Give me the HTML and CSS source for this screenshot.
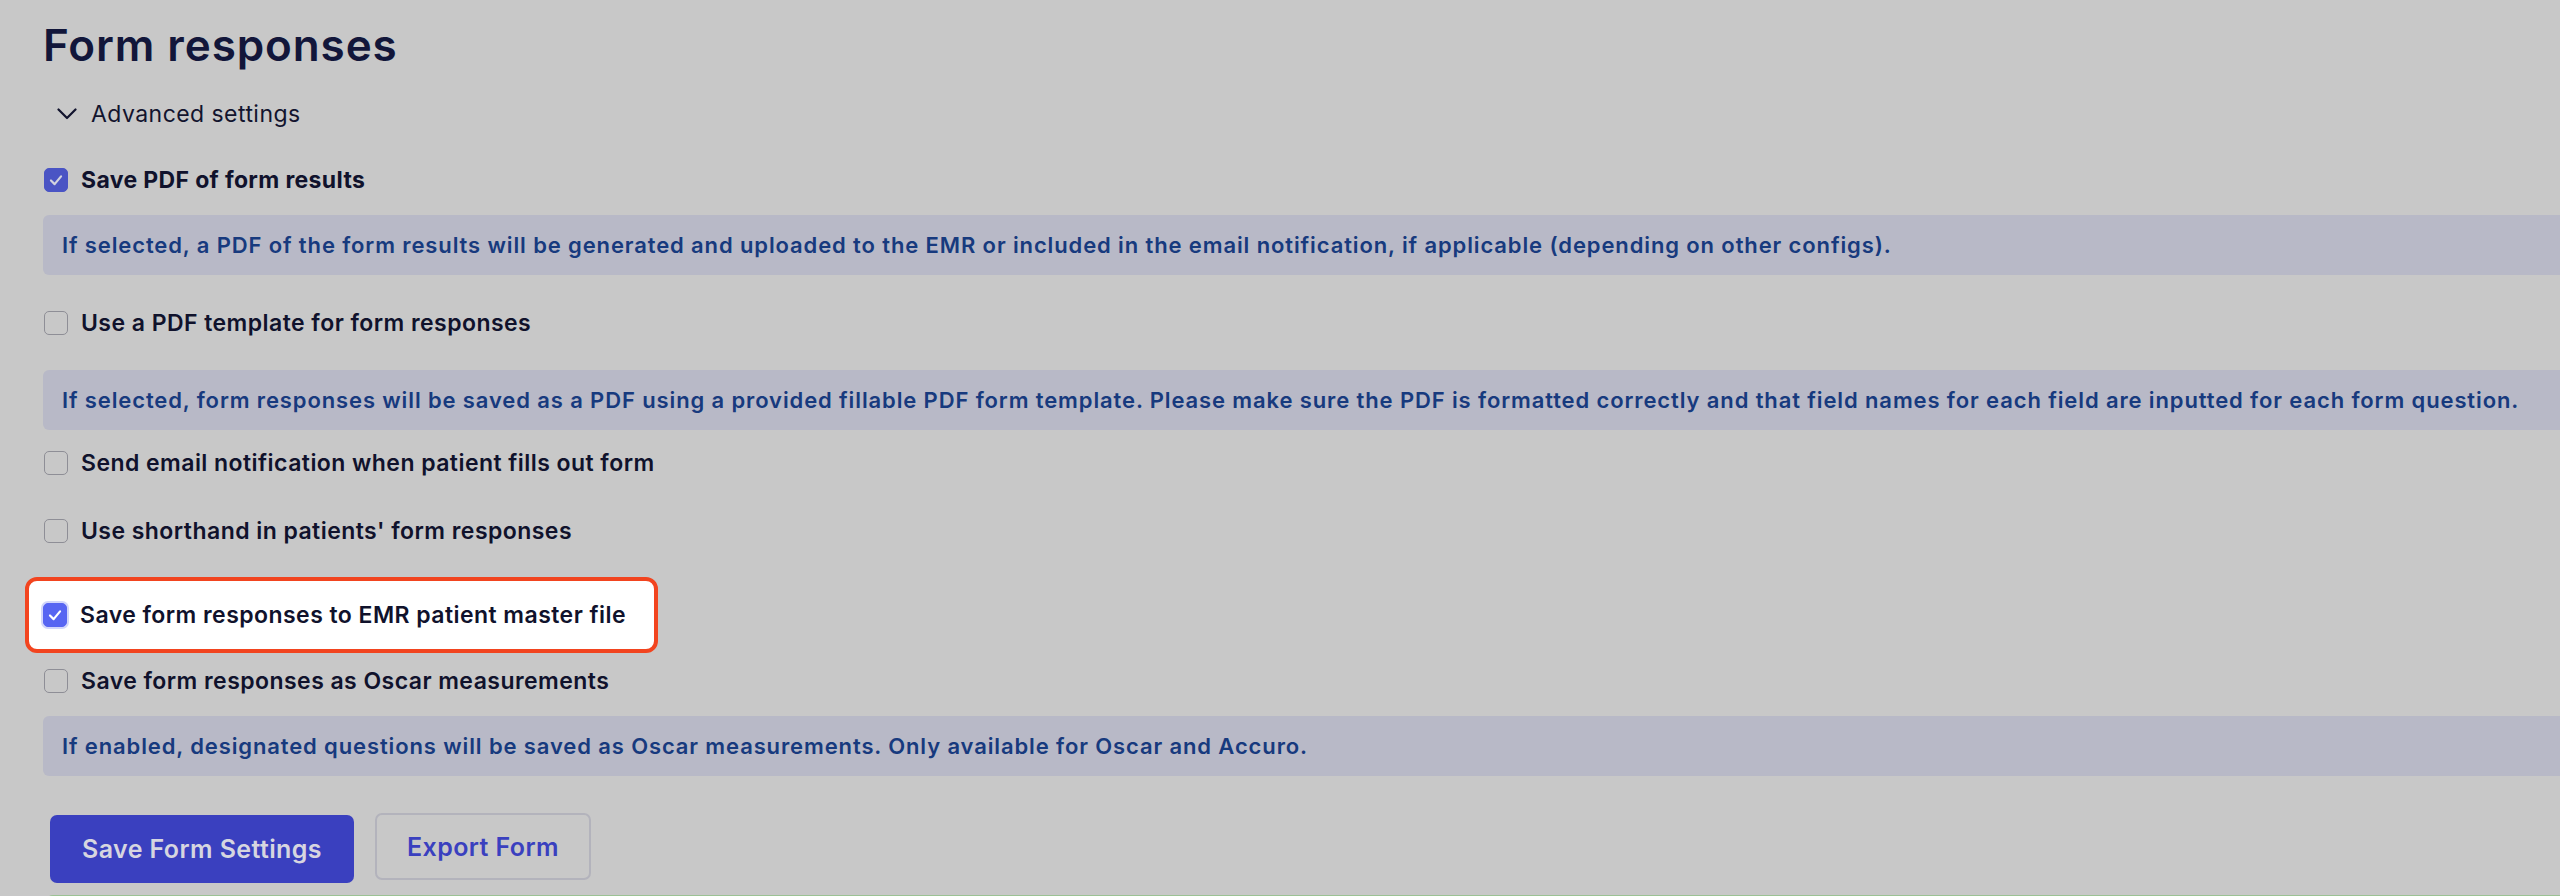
FILE: index.html
```html
<!DOCTYPE html>
<html lang="en">
<head>
<meta charset="utf-8">
<title>Form responses</title>
<link rel="stylesheet" href="styles.css">
</head>
<body>
<main class="page">
  <h1 class="title">Form responses</h1>
  <div class="advanced">
    <svg class="chev" width="20" height="12" viewBox="0 0 20 12"><path d="M1.5 1.5 L10 10 L18.5 1.5" fill="none" stroke="#12142e" stroke-width="2.2" stroke-linecap="round" stroke-linejoin="round"/></svg>
    <span>Advanced settings</span>
  </div>

  <label class="opt opt-1 strong"><span class="cb checked"><svg viewBox="0 0 24 24"><path d="M6.5 12.5 L10.5 16.5 L17.5 8" fill="none" stroke="#d2d3de" stroke-width="2.4" stroke-linecap="round" stroke-linejoin="round"/></svg></span><span class="lbl">Save PDF of form results</span></label>
  <div class="info info-1">If selected, a PDF of the form results will be generated and uploaded to the EMR or included in the email notification, if applicable (depending on other configs).</div>

  <label class="opt opt-2"><span class="cb"></span><span class="lbl">Use a PDF template for form responses</span></label>
  <div class="info info-2">If selected, form responses will be saved as a PDF using a provided fillable PDF form template. Please make sure the PDF is formatted correctly and that field names for each field are inputted for each form question.</div>

  <label class="opt opt-3"><span class="cb"></span><span class="lbl">Send email notification when patient fills out form</span></label>
  <label class="opt opt-4"><span class="cb"></span><span class="lbl">Use shorthand in patients' form responses</span></label>

  <label class="opt opt-5 spotlight"><span class="cb checked bright"><svg viewBox="0 0 24 24"><path d="M6.5 12.5 L10.5 16.5 L17.5 8" fill="none" stroke="#ffffff" stroke-width="2.4" stroke-linecap="round" stroke-linejoin="round"/></svg></span><span class="lbl">Save form responses to EMR patient master file</span></label>

  <label class="opt opt-6"><span class="cb"></span><span class="lbl">Save form responses as Oscar measurements</span></label>
  <div class="info info-3">If enabled, designated questions will be saved as Oscar measurements. Only available for Oscar and Accuro.</div>

  <div class="actions">
    <button class="btn btn-primary">Save Form Settings</button>
    <button class="btn btn-secondary">Export Form</button>
  </div>
  <div class="next-card"></div>
</main>
</body>
</html>
```
FILE: styles.css
```css
html, body {
  margin: 0;
  padding: 0;
  background: #c8c8c8;
}
body {
  width: 2560px;
  height: 896px;
  overflow: hidden;
  font-family: Inter, Roboto, "Liberation Sans", sans-serif;
  color: #10122c;
}
.page {
  padding: 20px 0 0 43px;
  display: flex;
  flex-direction: column;
  align-items: flex-start;
}
.title {
  margin: 0;
  font-family: Inter, "Noto Sans", sans-serif;
  font-weight: 600;
  font-size: 44px;
  line-height: 50px;
  color: #12163a;
  letter-spacing: 0.9px;
}
.advanced {
  margin-top: 29px;
  height: 30px;
  display: flex;
  align-items: center;
  gap: 14px;
  padding-left: 14px;
  font-family: Inter, "Noto Sans", sans-serif;
  font-size: 23px;
  line-height: 30px;
  letter-spacing: 0.45px;
  color: #12142e;
}
.chev { display: block; }
.opt {
  display: flex;
  align-items: center;
  height: 32px;
  padding-left: 1px;
  gap: 13px;
  font-family: Inter, Roboto, sans-serif;
  font-weight: 600;
  font-size: 23px;
  line-height: 32px;
  letter-spacing: 0.45px;
  color: #10122c;
}
.opt.strong {
  font-weight: 700;
  font-size: 23px;
  letter-spacing: 0.35px;
}
.cb {
  box-sizing: border-box;
  width: 24px;
  height: 24px;
  border: 1.5px solid #8e8e96;
  border-radius: 5px;
  flex: none;
  display: flex;
  align-items: center;
  justify-content: center;
}
.cb svg { width: 22px; height: 22px; display: block; }
.cb.checked {
  background: #4a54c4;
  border-color: #4a54c4;
}
.cb.bright {
  background: #5765f2;
  border-color: #5765f2;
  box-shadow: 0 0 0 2px #d2d6fb;
}
.info {
  align-self: stretch;
  height: 60px;
  line-height: 60px;
  padding-left: 19px;
  background: #b8b9c7;
  border-radius: 6px 0 0 6px;
  color: #173a7e;
  font-family: Inter, Roboto, sans-serif;
  font-weight: 600;
  font-size: 22px;
  letter-spacing: 0.88px;
  white-space: nowrap;
}
.opt-1 { margin-top: 35px; }
.info-1 { margin-top: 19px; }
.opt-2 { margin-top: 32px; }
.info-2 { margin-top: 31px; }
.opt-3 { margin-top: 17px; }
.opt-4 { margin-top: 36px; }
.spotlight {
  margin-top: 30px;
  margin-left: -18px;
  height: 68px;
  padding: 0 28px 0 14px;
  background: #ffffff;
  border: 4px solid #f2441f;
  border-radius: 12px;
}
.opt-6 { margin-top: 12px; }
.info-3 { margin-top: 19px; }
.actions {
  margin-top: 37px;
  display: flex;
  align-items: flex-start;
  gap: 21px;
  padding-left: 7px;
}
.btn {
  font-family: Inter, "Noto Sans", sans-serif;
  font-weight: 600;
  font-size: 25px;
  letter-spacing: 0.4px;
  border-radius: 7px;
  cursor: pointer;
}
.btn-primary {
  margin-top: 2px;
  width: 304px;
  height: 68px;
  background: #3a40bf;
  border: none;
  color: #d6d6e0;
}
.btn-secondary {
  width: 216px;
  height: 67px;
  background: transparent;
  border: 2px solid #b3b3bc;
  color: #3a40bf;
}
.next-card {
  margin-top: 12px;
  margin-left: 2px;
  align-self: stretch;
  height: 10px;
  border-top: 2px solid #9cc294;
  border-radius: 8px 0 0 0;
}
```
